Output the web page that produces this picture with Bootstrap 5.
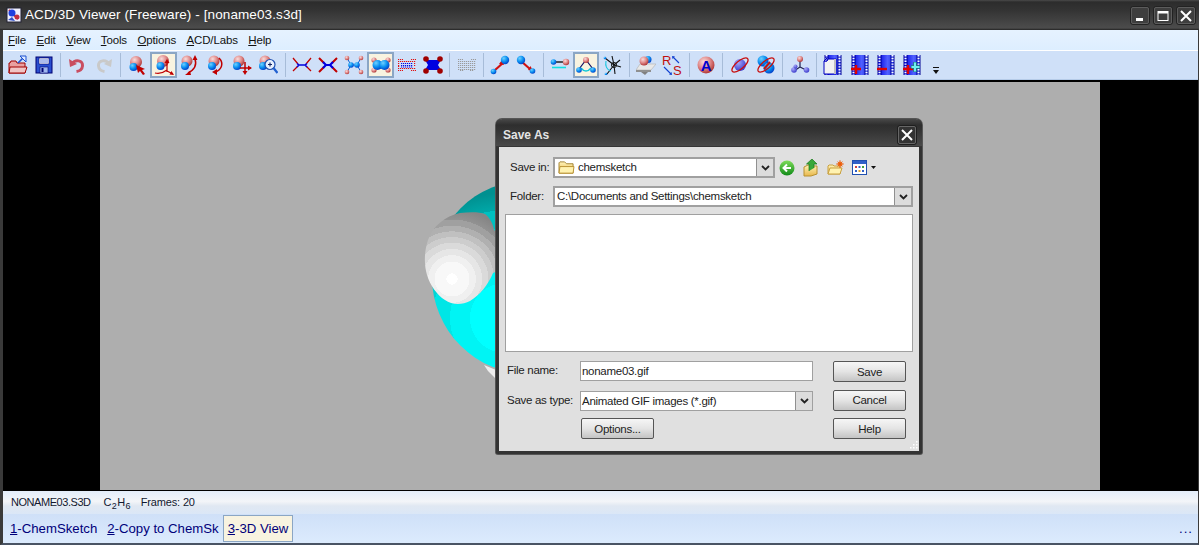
<!DOCTYPE html>
<html lang="en">
<head>
    <meta charset="UTF-8">
    <meta name="viewport" content="width=device-width, initial-scale=1.0">
    <title>ACD/3D Viewer (Freeware) - [noname03.s3d]</title>
    <link href="https://cdn.jsdelivr.net/npm/bootstrap@5.3.0/dist/css/bootstrap.min.css" rel="stylesheet">
    <style>
        html, body { height: 100%; overflow: hidden; }
        body { font-family: "Liberation Sans", Arial, sans-serif; font-size: 11.5px; letter-spacing: -.28px; background: #3a3a3a; color: #111; }
        .svg-defs { position: absolute; width: 0; height: 0; }

        .app-frame { height: 545px; border-left: 3px solid #3a3a3a; border-right: 1px solid #3a3a3a; border-bottom: 2px solid #4a5464; }
        .app-title { height: 30px; margin-left: -3px; margin-right: -1px; padding-left: 6px; background: linear-gradient(#4a4a4a 0, #2c2c2c 2px, #333 10px, #4c4c4c 28px, #222 30px); color: #fff; font-size: 13.5px; letter-spacing: .1px; }
        .app-title .app-name { margin-left: 3px; }
        .win-btn { width: 20px; height: 19px; margin-left: 3px; border: 1px solid #222; outline: 1px solid #5c5c5c; outline-offset: -2px; border-radius: 3px; background: #3e3e3e; padding: 0; }
        .win-btns { padding-right: 3px; padding-top: 1px; }

        .menu-strip { height: 20px; background: linear-gradient(#e6f2ff, #ddeeff); padding: 1px 0 0 2px; letter-spacing: -.15px; }
        .menu-item { padding: 0 3px; margin-right: 4.5px; color: #111; text-decoration: none; }
        .tool-strip { height: 30px; background: #cfe0f8; border-top: 1px solid #fff; border-bottom: 1px solid #b5cbe8; padding-left: 1.500px; }
        .tool-btn { width: 26.2px; height: 26px; padding: 0; display: flex; align-items: center; justify-content: center; border: 2px solid transparent; border-radius: 0; flex: none; }
        .tool-btn.is-on { background: #f8f3e0; border-color: #8ba6c4; }
        .tool-btn svg { width: 20px; height: 20px; flex: none; }
        .tool-sep { width: 1px; height: 24px; margin: 0 3.25px; background: #a7bcd8; flex: none; }
        .tool-more { margin-left: 8px; margin-top: 11px; }

        .stage-wrap { height: 411px; background: #000; padding: 2px 0 1px 97px; }
        .stage { width: 1000px; height: 408px; background: #aeaeae; position: relative; }
        .stage svg { position: absolute; left: 0; top: 0; }

        .status-strip { height: 23px; background: linear-gradient(#e3edfa, #f3f5f8 45%, #e0e8f2 65%, #dbe7f7); padding-left: 8px; color: #111830; font-size: 11px; letter-spacing: -.15px; }
        .status-file { letter-spacing: -.45px; margin-right: 13px; }
        .status-formula { margin-right: 10px; letter-spacing: .3px; }
        .status-strip sub { font-size: 9px; bottom: -.3em; }
        .tab-strip { height: 29px; background: linear-gradient(#cfe0f8, #dcebfd); padding-left: 4px; font-size: 13.2px; letter-spacing: 0; color: #00007a; }
        .tab-item { height: 27px; padding: 0 3px; display: flex; align-items: center; color: #00007a; margin-right: 4px; }
        .tab-item.is-on { background: #f8f3e0; border: 1px solid #8ba6c4; padding: 0 4px; margin-left: -3px; }
        .tab-dots { margin-left: auto; margin-right: 5px; letter-spacing: 1px; }

        .save-dialog { position: absolute; left: 496px; top: 119px; width: 426px; height: 335px; border: 3px solid #333; border-top: 0; border-radius: 6px 6px 2px 2px; background: #e0e0e0; box-shadow: 0 0 0 1px #555; }
        .dlg-title { height: 28px; margin: 0 -3px; padding: 3px 5px 0 7px; background: linear-gradient(#484848 0, #2e2e2e 6px, #343434 12px, #4a4a4a 27px, #222 28px); border-radius: 6px 6px 0 0; color: #e4e4e4; font-size: 12px; font-weight: 700; letter-spacing: 0; }
        .dlg-close { width: 20px; height: 20px; border: 1px solid #1e1e1e; outline: 1px solid #666; outline-offset: -2px; border-radius: 3px; background: #333; padding: 0; }
        .dlg-body { padding: 10px 6px 0; color: #222; white-space: nowrap; }
        .dlg-label { width: 48px; padding-left: 5px; flex: none; }
        .dlg-combo { height: 21px; border: 2px solid #a0a0a0; background: #fff; padding-left: 2px; overflow: hidden; }
        .dlg-combo-arrow { width: 17px; height: 100%; margin-left: auto; flex: none; background: #dcdcdc; border-left: 1px solid #909090; display: flex; align-items: center; justify-content: center; }
        .dlg-combo-wide { flex: 1 1 0; }
        .dlg-combo-short { width: 222px; }
        .dlg-folder { margin: 0 3px 0 1px; }
        .dlg-list { height: 138px; margin-top: 7px; background: #fff; border: 1px solid #a0a0a0; }
        .dlg-bottom { margin-top: 9px; padding-right: 7px; }
        .dlg-left { width: 308px; }
        .dlg-left-label { width: 75px; padding-left: 2px; flex: none; }
        .dlg-input { width: 233px; height: 20px; border: 1px solid #a0a0a0; background: #fff; padding-left: 1px; line-height: 18px; }
        .dlg-type-row { margin-top: 10px; margin-bottom: 7px; }
        .dlg-btn { width: 73px; height: 21px; padding: 0; font-size: 11.5px; letter-spacing: -.28px; line-height: 18px; color: #222; border: 1px solid #555; border-radius: 2px; background: linear-gradient(#f6f6f6, #e4e4e4 50%, #c4c4c4); }
        .dlg-options { margin-left: 76px; }
        .dlg-btn-stack { gap: 7.5px; }
        .dlg-tools svg { display: block; }
        .dlg-grip { position: absolute; right: 1px; bottom: 1px; width: 10px; height: 10px; }
    </style>
</head>
<body class="m-0">
    <svg class="svg-defs" xmlns="http://www.w3.org/2000/svg">
        <defs>
            <radialGradient id="gr-red" cx=".38" cy=".32" r=".75"><stop offset="0" stop-color="#f8dcdc"/><stop offset=".5" stop-color="#e08a8a"/><stop offset="1" stop-color="#a82828"/></radialGradient>
            <radialGradient id="gr-blue" cx=".35" cy=".3" r=".8"><stop offset="0" stop-color="#6fd0ff"/><stop offset=".5" stop-color="#0a90f0"/><stop offset="1" stop-color="#0030c0"/></radialGradient>
            <radialGradient id="gr-violet" cx=".35" cy=".3" r=".8"><stop offset="0" stop-color="#a8a8f8"/><stop offset="1" stop-color="#3030c8"/></radialGradient>
            <linearGradient id="gr-film" x1="0" x2="1"><stop offset="0" stop-color="#0000e0"/><stop offset=".6" stop-color="#5060ff"/><stop offset="1" stop-color="#2030e0"/></linearGradient>
            <linearGradient id="gr-folder" x1="0" y1="0" x2="0" y2="1"><stop offset="0" stop-color="#fff3b8"/><stop offset="1" stop-color="#e8b84c"/></linearGradient>
            <linearGradient id="gr-green" x1="0" y1="0" x2="0" y2="1"><stop offset="0" stop-color="#7edc5a"/><stop offset="1" stop-color="#108a18"/></linearGradient>
            <radialGradient id="gr-cyan" gradientUnits="userSpaceOnUse" cx="505" cy="318" r="125">
                <stop offset="0" stop-color="#00ffff"/><stop offset=".28" stop-color="#00ffff"/>
                <stop offset=".28" stop-color="#00f4f4"/><stop offset=".44" stop-color="#00f4f4"/>
                <stop offset=".44" stop-color="#00e6e6"/><stop offset=".58" stop-color="#00e6e6"/>
                <stop offset=".58" stop-color="#00d4d4"/><stop offset=".72" stop-color="#00d4d4"/>
                <stop offset=".72" stop-color="#00c0c0"/><stop offset=".86" stop-color="#00c0c0"/>
                <stop offset=".86" stop-color="#00a8a8"/><stop offset="1" stop-color="#009090"/>
            </radialGradient>
            <radialGradient id="gr-white" gradientUnits="userSpaceOnUse" cx="452" cy="279" r="70">
                <stop offset="0" stop-color="#fff"/><stop offset=".08" stop-color="#fff"/>
                <stop offset=".08" stop-color="#f8f8f8"/><stop offset=".25" stop-color="#f8f8f8"/>
                <stop offset=".25" stop-color="#f0f0f0"/><stop offset=".34" stop-color="#f0f0f0"/>
                <stop offset=".34" stop-color="#e6e6e6"/><stop offset=".43" stop-color="#e6e6e6"/>
                <stop offset=".43" stop-color="#dadada"/><stop offset=".52" stop-color="#dadada"/>
                <stop offset=".52" stop-color="#cdcdcd"/><stop offset=".6" stop-color="#cdcdcd"/>
                <stop offset=".6" stop-color="#c0c0c0"/><stop offset=".68" stop-color="#c0c0c0"/>
                <stop offset=".68" stop-color="#b0b0b0"/><stop offset=".76" stop-color="#b0b0b0"/>
                <stop offset=".76" stop-color="#a0a0a0"/><stop offset=".85" stop-color="#a0a0a0"/>
                <stop offset=".85" stop-color="#929292"/><stop offset="1" stop-color="#858585"/>
            </radialGradient>

            <g id="pair"><circle cx="9" cy="7" r="6" fill="url(#gr-red)"/><circle cx="6.5" cy="12" r="4" fill="url(#gr-blue)"/></g>

            <symbol id="i-open" viewBox="0 0 20 20"><path d="M1 18V8h1l1-2h5l1 2h8v10z" fill="#e9a0a0" stroke="#a00000"/><path d="M1 18l1-6h17l-2 6z" fill="#f0c4c4" stroke="#a00000"/><path d="M10 8l5-5" stroke="#1a50d0" stroke-width="1.6" fill="none"/><path d="M12 1h6v6l-2-2-2-2z" fill="#dfeaff" stroke="#1a50d0"/></symbol>
            <symbol id="i-save" viewBox="0 0 20 20"><rect x="2" y="2" width="16" height="16" fill="#2a4fd0" stroke="#000070"/><rect x="5" y="3" width="10" height="6" fill="#fff" stroke="#000070" stroke-width=".6"/><path d="M6 5h8M6 7h8" stroke="#5a78d8"/><rect x="6" y="12" width="8" height="6" fill="#9fb6f0" stroke="#000070" stroke-width=".6"/><rect x="7.5" y="13" width="2" height="4" fill="#000070"/></symbol>
            <symbol id="i-undo" viewBox="0 0 20 20"><path d="M5 9C8 4 16 5 15.5 11C15.200 14 13 16 9.500 16.500" fill="none" stroke="#c94d60" stroke-width="3"/><path d="M2 4l1 8 7-3z" fill="#c94d60"/></symbol>
            <symbol id="i-redo" viewBox="0 0 20 20"><path d="M15 9C12 4 4 5 4.500 11C4.800 14 7 16 10.500 16.500" fill="none" stroke="#c9c9c9" stroke-width="3"/><path d="M18 4l-1 8-7-3z" fill="#c9c9c9"/></symbol>

            <symbol id="i-pick" viewBox="0 0 20 20"><use href="#pair"/><path d="M9 10l9 4-3 1 3 4-2 1-3-4-2 2z" fill="#c00000"/></symbol>
            <symbol id="i-move" viewBox="0 0 20 20"><use href="#pair" transform="translate(0 -1)"/><path d="M13 17V7M1 18c4 1 8 0 12-3M13 16l6 3" stroke="#c00000" fill="none" stroke-width="1.200"/><path d="M13 4l-2.500 4h5zM20 20l-4.500-.5 2-3.500z" fill="#c00000"/></symbol>
            <symbol id="i-rotz" viewBox="0 0 20 20"><circle cx="7" cy="6" r="5.500" fill="url(#gr-red)"/><circle cx="5" cy="11" r="4" fill="url(#gr-blue)"/><path d="M15 4C17 10 14 15 8 18" fill="none" stroke="#c00000" stroke-width="1.500"/><path d="M15 0l-2.500 5h5zM5 20l5-4 1 4z" fill="#c00000"/></symbol>
            <symbol id="i-rotx" viewBox="0 0 20 20"><circle cx="8" cy="6" r="5.500" fill="url(#gr-red)"/><circle cx="6" cy="11" r="4" fill="url(#gr-blue)"/><path d="M13 3C18 8 16 15 9 17" fill="none" stroke="#c00000" stroke-width="1.500"/><path d="M6 17l5-3v6z" fill="#c00000"/></symbol>
            <symbol id="i-shift" viewBox="0 0 20 20"><circle cx="7" cy="6" r="5.500" fill="url(#gr-red)"/><circle cx="5" cy="11" r="4" fill="url(#gr-blue)"/><path d="M13 7v11M8 13h11" stroke="#c00000" stroke-width="1.500"/><path d="M13 20l-2.500-4h5zM20 13l-4-2.500v5z" fill="#c00000"/></symbol>
            <symbol id="i-zoom" viewBox="0 0 20 20"><circle cx="7" cy="6" r="5.500" fill="url(#gr-red)"/><circle cx="5" cy="11" r="4" fill="url(#gr-blue)"/><circle cx="12" cy="9.500" r="5" fill="#eaf2ff" stroke="#2050b0" stroke-width="1.200"/><path d="M10 9.500h4M12 7.500v4" stroke="#102060" stroke-width="1.100"/><path d="M15.500 13l4 5" stroke="#2060d0" stroke-width="2.200"/></symbol>

            <symbol id="i-wire" viewBox="0 0 20 20"><path d="M1 3l5 6M19 3l-5 6M1 16l5-5M19 16l-5-5" stroke="#c00000" stroke-width="1.300"/><path d="M5 8.500l2 1.500h6l2-1.500M5 12l2-2M15 12l-2-2" stroke="#0000e0" stroke-width="1.500" fill="none"/></symbol>
            <symbol id="i-stick" viewBox="0 0 20 20"><path d="M1 3l5 5M19 3l-5 5M1 17l5-5M19 17l-5-5" stroke="#c00000" stroke-width="2"/><path d="M5 7l3 3h4l3-3M5 13l3-3M15 13l-3-3" stroke="#0000e0" stroke-width="2.200" fill="none"/></symbol>
            <symbol id="i-ball" viewBox="0 0 20 20"><path d="M3 3l4 7h6l4-7M3 17l4-7M17 17l-4-7" stroke="#1060d0" stroke-width="1" fill="none"/><circle cx="3" cy="3" r="2.300" fill="url(#gr-red)"/><circle cx="17" cy="3" r="2.300" fill="url(#gr-red)"/><circle cx="3" cy="17" r="2.300" fill="url(#gr-red)"/><circle cx="17" cy="17" r="2.300" fill="url(#gr-red)"/><circle cx="7" cy="10" r="2.800" fill="url(#gr-blue)"/><circle cx="13" cy="10" r="2.800" fill="url(#gr-blue)"/></symbol>
            <symbol id="i-space" viewBox="0 0 20 20"><circle cx="3" cy="5" r="2.600" fill="url(#gr-red)"/><circle cx="17" cy="5" r="2.600" fill="url(#gr-red)"/><circle cx="3" cy="15" r="2.600" fill="url(#gr-red)"/><circle cx="17" cy="15" r="2.600" fill="url(#gr-red)"/><circle cx="6.500" cy="10" r="5" fill="url(#gr-blue)"/><circle cx="13.500" cy="10" r="5" fill="url(#gr-blue)"/></symbol>
            <symbol id="i-dots" viewBox="0 0 20 20"><path d="M1 4.500h5M14 4.500h5M1 6.500h18M1 13.500h18M1 15.500h5M14 15.500h5M1 8.500h2M1 10.500h2M1 11.500h2M17 8.500h2M17 10.500h2" stroke="#e01010" stroke-width="1.200" stroke-dasharray="1.200 .8"/><path d="M4 8.500h12M4 10.500h12M4 12h12" stroke="#0808e0" stroke-width="1.200" stroke-dasharray="1.200 .8"/></symbol>
            <symbol id="i-solid" viewBox="0 0 20 20"><path d="M2 5h16l-3 5 3 5H2l3-5z" fill="#0000e0"/><circle cx="3" cy="4" r="2.800" fill="#a00000"/><circle cx="17" cy="4" r="2.800" fill="#a00000"/><circle cx="3" cy="16" r="2.800" fill="#a00000"/><circle cx="17" cy="16" r="2.800" fill="#a00000"/></symbol>
            <symbol id="i-off" viewBox="0 0 20 20"><path d="M1 4.500h5M14 4.500h5M1 6.500h18M1 8.500h18M1 10.500h18M1 12.500h18M1 14.500h18M3 15.500h4M13 15.500h4" stroke="#9a9a9a" stroke-width="1.200" stroke-dasharray="1.200 .8"/></symbol>

            <symbol id="i-up" viewBox="0 0 20 20"><path d="M5 15l8-7" stroke="#d01010" stroke-width="2.200"/><path d="M12 5l2 5-5-1z" fill="#d01010"/><circle cx="3.500" cy="16.500" r="2.800" fill="url(#gr-blue)"/><circle cx="15" cy="5" r="4.200" fill="url(#gr-blue)"/></symbol>
            <symbol id="i-down" viewBox="0 0 20 20"><path d="M6 7l8 7" stroke="#d01010" stroke-width="2.200"/><path d="M17 16l-5-1 2.500-4z" fill="#d01010"/><circle cx="5" cy="5" r="4.200" fill="url(#gr-blue)"/><circle cx="16.500" cy="16" r="2.800" fill="url(#gr-blue)"/></symbol>
            <symbol id="i-bond" viewBox="0 0 20 20"><path d="M4 7h13" stroke="#202020" stroke-width="1.500"/><circle cx="3.500" cy="7" r="2.800" fill="url(#gr-blue)"/><circle cx="16" cy="7" r="3.200" fill="url(#gr-red)"/><path d="M2 12.500h14" stroke="#10e0e0" stroke-width="1.600"/></symbol>
            <symbol id="i-angle" viewBox="0 0 20 20"><path d="M3 14l7-9 7 9" stroke="#101060" stroke-width="1.200" fill="none"/><path d="M5 13c3 4 7 4 10 0" stroke="#10c8d8" fill="none" stroke-width="1.300"/><circle cx="10" cy="5" r="3" fill="url(#gr-red)"/><circle cx="3" cy="15" r="2.800" fill="url(#gr-blue)"/><circle cx="17" cy="15" r="2.800" fill="url(#gr-blue)"/></symbol>
            <symbol id="i-torsion" viewBox="0 0 20 20"><path d="M11 10L9 1M11 10l6-5M11 10l7 2M11 10l1 9M11 10L2 3M11 10l-7 9" stroke="#101010" stroke-width="1.100"/><path d="M3 6c-1 5 1 9 5 10" stroke="#20c8e0" fill="none" stroke-width="1.200"/><circle cx="11" cy="10" r="2.600" fill="none" stroke="#202020"/><circle cx="2" cy="3" r="1.300" fill="url(#gr-blue)"/><circle cx="3" cy="19" r="1.300" fill="url(#gr-blue)"/></symbol>
            <symbol id="i-plate" viewBox="0 0 20 20"><path d="M4 9h16l-5 6H0z" fill="#e8e8e8" stroke="#b0b0b0" stroke-width=".6"/><path d="M0 15h15v2H0z" fill="#909090"/><path d="M5 17h7l-3 3z" fill="#808080"/><circle cx="12" cy="4.500" r="3.500" fill="url(#gr-blue)"/><circle cx="8" cy="6" r="4.500" fill="url(#gr-red)"/></symbol>
            <symbol id="i-rs" viewBox="0 0 20 20"><text x="0" y="10" font-family="Liberation Sans, sans-serif" font-size="13" fill="#c01010">R</text><text x="11" y="20" font-family="Liberation Sans, sans-serif" font-size="13" fill="#c01010">S</text><path d="M11 2l6 6M2 12l7 7" stroke="#1040d0" stroke-width="1.100"/><path d="M10 1l3 .5-2.500 2.500zM10 20l-3-.5 2.500-2.500z" fill="#1040d0"/></symbol>
            <symbol id="i-atom" viewBox="0 0 20 20"><circle cx="10" cy="10" r="8.500" fill="url(#gr-red)"/><text x="10" y="15.500" text-anchor="middle" font-family="Liberation Sans, sans-serif" font-size="15" font-weight="700" fill="#0000d0">A</text></symbol>
            <symbol id="i-orbit" viewBox="0 0 20 20"><circle cx="10" cy="10" r="6" fill="url(#gr-violet)"/><ellipse cx="10" cy="10" rx="10" ry="4" transform="rotate(-40 10 10)" fill="none" stroke="#c81010" stroke-width="1.300"/></symbol>
            <symbol id="i-orbit2" viewBox="0 0 20 20"><circle cx="7" cy="6" r="5.500" fill="url(#gr-blue)"/><circle cx="13" cy="13" r="5.500" fill="url(#gr-blue)"/><ellipse cx="10" cy="10" rx="10" ry="4" transform="rotate(-40 10 10)" fill="none" stroke="#c81010" stroke-width="1.300"/><path d="M8 14l6-7" stroke="#c81010" stroke-width="2"/></symbol>
            <symbol id="i-tree" viewBox="0 0 20 20"><path d="M10 4v8l-6 4M10 12l6 3" stroke="#202050" stroke-width="1.200" fill="none"/><circle cx="10" cy="4" r="3" fill="url(#gr-red)"/><circle cx="4" cy="15" r="2.800" fill="url(#gr-violet)"/><circle cx="5.500" cy="11.500" r="2" fill="url(#gr-violet)"/><circle cx="16.500" cy="15" r="2.800" fill="url(#gr-violet)"/></symbol>

            <g id="film"><rect x="2" y="0" width="16" height="20" fill="url(#gr-film)"/><path d="M2 0v20M5 0v20M15 0v20M18 0v20" stroke="#000090"/><path d="M3.500 0v20M16.500 0v20" stroke="#fff" stroke-width="2" stroke-dasharray="1.400 1.400"/></g>
            <symbol id="i-film" viewBox="0 0 20 20"><use href="#film"/><path d="M1 6h3l1-2h8v15H1z" fill="#f2f2f2" stroke="#0000c0"/><path d="M1 6l3-3v3z" fill="#fff" stroke="#0000c0"/><rect x="11" y="4" width="2" height="15" fill="#c0c0c0"/></symbol>
            <symbol id="i-film-add" viewBox="0 0 20 20"><use href="#film"/><path d="M6 10v9M1 14h10" stroke="#e00000" stroke-width="2.400"/></symbol>
            <symbol id="i-film-del" viewBox="0 0 20 20"><use href="#film"/><path d="M1 14h10" stroke="#e00000" stroke-width="2.400"/></symbol>
            <symbol id="i-film-all" viewBox="0 0 20 20"><use href="#film"/><path d="M6 10v9M1 14h10" stroke="#e00000" stroke-width="2.400"/><path d="M13 7v10M9 12h9" stroke="#208080" stroke-width="3.600"/><path d="M13 7.500v9M9.500 12h8" stroke="#70f0f0" stroke-width="2"/></symbol>

            <symbol id="i-folder" viewBox="0 0 18 16"><path d="M1 14V3l1-1h5l2 2h7v10z" fill="url(#gr-folder)" stroke="#a08030"/><path d="M1 14l1-7h15l-1 7z" fill="#fff2b0" stroke="#b89030"/></symbol>
            <symbol id="i-combo" viewBox="0 0 9 6"><path d="M1 1l3.500 3.500L8 1" fill="none" stroke="#222" stroke-width="1.800"/></symbol>
        </defs>
    </svg>

    <div class="app-frame d-flex flex-column">
        <div class="app-title d-flex align-items-center">
            <svg width="16" height="16" viewBox="0 0 16 16"><rect x="1" y="1" width="14" height="14" fill="#f0f0ff" stroke="#223"/><path d="M3 3l9 9" stroke="#d02020" stroke-width="2"/><circle cx="6" cy="6" r="3.500" fill="#2040e0"/><circle cx="11" cy="10" r="2.500" fill="#c03040"/><path d="M2 13l4-3 3 4z" fill="#3050c8"/></svg>
            <span class="app-name">ACD/3D Viewer (Freeware) - [noname03.s3d]</span>
            <div class="win-btns d-flex ms-auto">
                <button class="win-btn d-flex align-items-center justify-content-center"><svg width="12" height="12" viewBox="0 0 12 12"><rect x="2" y="8" width="7" height="3" fill="#fff"/></svg></button>
                <button class="win-btn d-flex align-items-center justify-content-center"><svg width="12" height="12" viewBox="0 0 12 12"><rect x="1" y="1.500" width="10" height="9" fill="none" stroke="#fff"/><rect x="1" y="1" width="10" height="2.500" fill="#fff"/></svg></button>
                <button class="win-btn d-flex align-items-center justify-content-center"><svg width="12" height="12" viewBox="0 0 12 12"><path d="M1 1l10 10M11 1L1 11" stroke="#fff" stroke-width="2"/></svg></button>
            </div>
        </div>

        <div class="menu-strip d-flex align-items-center">
            <span class="menu-item"><u>F</u>ile</span>
            <span class="menu-item"><u>E</u>dit</span>
            <span class="menu-item"><u>V</u>iew</span>
            <span class="menu-item"><u>T</u>ools</span>
            <span class="menu-item"><u>O</u>ptions</span>
            <span class="menu-item"><u>A</u>CD/Labs</span>
            <span class="menu-item"><u>H</u>elp</span>
        </div>

        <div class="tool-strip d-flex align-items-center">
            <div class="tool-btn"><svg><use href="#i-open"/></svg></div>
            <div class="tool-btn"><svg><use href="#i-save"/></svg></div>
            <div class="tool-sep"></div>
            <div class="tool-btn"><svg><use href="#i-undo"/></svg></div>
            <div class="tool-btn"><svg><use href="#i-redo"/></svg></div>
            <div class="tool-sep"></div>
            <div class="tool-btn"><svg><use href="#i-pick"/></svg></div>
            <div class="tool-btn is-on"><svg><use href="#i-move"/></svg></div>
            <div class="tool-btn"><svg><use href="#i-rotz"/></svg></div>
            <div class="tool-btn"><svg><use href="#i-rotx"/></svg></div>
            <div class="tool-btn"><svg><use href="#i-shift"/></svg></div>
            <div class="tool-btn"><svg><use href="#i-zoom"/></svg></div>
            <div class="tool-sep"></div>
            <div class="tool-btn"><svg><use href="#i-wire"/></svg></div>
            <div class="tool-btn"><svg><use href="#i-stick"/></svg></div>
            <div class="tool-btn"><svg><use href="#i-ball"/></svg></div>
            <div class="tool-btn is-on"><svg><use href="#i-space"/></svg></div>
            <div class="tool-btn"><svg><use href="#i-dots"/></svg></div>
            <div class="tool-btn"><svg><use href="#i-solid"/></svg></div>
            <div class="tool-sep"></div>
            <div class="tool-btn"><svg><use href="#i-off"/></svg></div>
            <div class="tool-sep"></div>
            <div class="tool-btn"><svg><use href="#i-up"/></svg></div>
            <div class="tool-btn"><svg><use href="#i-down"/></svg></div>
            <div class="tool-sep"></div>
            <div class="tool-btn"><svg><use href="#i-bond"/></svg></div>
            <div class="tool-btn is-on"><svg><use href="#i-angle"/></svg></div>
            <div class="tool-btn"><svg><use href="#i-torsion"/></svg></div>
            <div class="tool-sep"></div>
            <div class="tool-btn"><svg><use href="#i-plate"/></svg></div>
            <div class="tool-btn"><svg><use href="#i-rs"/></svg></div>
            <div class="tool-sep"></div>
            <div class="tool-btn"><svg><use href="#i-atom"/></svg></div>
            <div class="tool-sep"></div>
            <div class="tool-btn"><svg><use href="#i-orbit"/></svg></div>
            <div class="tool-btn"><svg><use href="#i-orbit2"/></svg></div>
            <div class="tool-sep"></div>
            <div class="tool-btn"><svg><use href="#i-tree"/></svg></div>
            <div class="tool-sep"></div>
            <div class="tool-btn"><svg><use href="#i-film"/></svg></div>
            <div class="tool-btn"><svg><use href="#i-film-add"/></svg></div>
            <div class="tool-btn"><svg><use href="#i-film-del"/></svg></div>
            <div class="tool-btn"><svg><use href="#i-film-all"/></svg></div>
            <svg class="tool-more" width="6" height="7" viewBox="0 0 6 7"><path d="M0 0h6v1H0zM0 3h6L3 7z" fill="#111"/></svg>
        </div>

        <div class="stage-wrap">
            <div class="stage">
                <svg width="1000" height="408" viewBox="100 82 1000 408">
                    <circle cx="529" cy="277" r="97" fill="url(#gr-cyan)"/>
                    <path d="M484 365l12 5v9l-8-8z" fill="#eee"/>
                    <path d="M460 213C470 212 480 212 485 214C490 218 493 224 494 230L500 235V270L493 273C488 285 480 295 470 301C462 305 452 305 445 300C437 295 430 285 427 275C424 265 424 252 428 240C433 226 445 216 460 213z" fill="url(#gr-white)"/>
                </svg>
            </div>
        </div>

        <div class="status-strip d-flex align-items-center">
            <span class="status-file">NONAME03.S3D</span>
            <span class="status-formula">C<sub>2</sub>H<sub>6</sub></span>
            <span>Frames: 20</span>
        </div>

        <div class="tab-strip d-flex align-items-center">
            <span class="tab-item"><u>1</u>-ChemSketch</span>
            <span class="tab-item"><u>2</u>-Copy to ChemSk</span>
            <span class="tab-item is-on"><u>3</u>-3D View</span>
            <span class="tab-dots">...</span>
        </div>
    </div>

    <div class="save-dialog">
        <div class="dlg-title d-flex align-items-center justify-content-between">
            <span>Save As</span>
            <button class="dlg-close d-flex align-items-center justify-content-center"><svg width="12" height="12" viewBox="0 0 12 12"><path d="M1 1l10 10M11 1L1 11" stroke="#fff" stroke-width="2"/></svg></button>
        </div>
        <div class="dlg-body">
            <div class="d-flex align-items-center">
                <span class="dlg-label">Save in:</span>
                <div class="dlg-combo dlg-combo-short d-flex align-items-center">
                    <svg class="dlg-folder" width="17" height="15"><use href="#i-folder"/></svg>
                    <span>chemsketch</span>
                    <span class="dlg-combo-arrow"><svg width="9" height="6"><use href="#i-combo"/></svg></span>
                </div>
                <div class="dlg-tools d-flex align-items-center">
                    <svg class="ms-1" width="16" height="16" viewBox="0 0 16 16"><circle cx="8" cy="8" r="7.500" fill="url(#gr-green)"/><path d="M12 8H5M8 4.500L4.500 8 8 11.500" fill="none" stroke="#fff" stroke-width="2"/></svg>
                    <svg class="ms-2" width="16" height="18" viewBox="0 0 16 18"><path d="M1 17V8l4-2h2l1 1h6v8l-6 2z" fill="url(#gr-folder)" stroke="#b89030"/><path d="M6 12V5H3.500L9 0l5 5h-3v4" fill="#3aa83a" stroke="#1a7a1a" stroke-width=".7"/></svg>
                    <svg class="ms-2" width="17" height="16" viewBox="0 0 17 16"><path d="M1 14V6l1-1h4l1 1h6v8z" fill="url(#gr-folder)" stroke="#c8a040"/><path d="M1 14l2-6h12l-2 6z" fill="#fff2b0" stroke="#c8a040"/><circle cx="13" cy="4" r="2.500" fill="#f08020"/><path d="M13 0v8M9 4h8M10.500 1.500l5 5M15.500 1.500l-5 5" stroke="#e85010" stroke-width=".7"/></svg>
                    <svg class="ms-2" width="15" height="15" viewBox="0 0 15 15"><rect x=".5" y=".5" width="14" height="14" fill="#fff" stroke="#2050b0"/><rect x="1" y="1" width="13" height="3" fill="#3060c8"/><path d="M3 6h2v2H3z" fill="#d04040"/><path d="M6.500 6h2v2h-2z" fill="#3060c8"/><path d="M10 6h2v2h-2z" fill="#40a040"/><path d="M3 10h2v2H3z" fill="#3060c8"/><path d="M6.500 10h2v2h-2z" fill="#e0a020"/><path d="M10 10h2v2h-2z" fill="#3060c8"/></svg>
                    <svg class="ms-1" width="5" height="3" viewBox="0 0 5 3"><path d="M0 0h5L2.500 3z" fill="#111"/></svg>
                </div>
            </div>
            <div class="d-flex align-items-center mt-2">
                <span class="dlg-label">Folder:</span>
                <div class="dlg-combo dlg-combo-wide d-flex align-items-center">
                    <span>C:\Documents and Settings\chemsketch</span>
                    <span class="dlg-combo-arrow"><svg width="9" height="6"><use href="#i-combo"/></svg></span>
                </div>
            </div>
            <div class="dlg-list"></div>
            <div class="dlg-bottom d-flex justify-content-between">
                <div class="dlg-left d-flex flex-column">
                    <div class="d-flex align-items-center"><span class="dlg-left-label">File name:</span><div class="dlg-input">noname03.gif</div></div>
                    <div class="dlg-type-row d-flex align-items-center"><span class="dlg-left-label">Save as type:</span><div class="dlg-combo dlg-input d-flex align-items-center"><span>Animated GIF images (*.gif)</span><span class="dlg-combo-arrow"><svg width="9" height="6"><use href="#i-combo"/></svg></span></div></div>
                    <div class="d-flex"><button class="dlg-btn dlg-options">Options...</button></div>
                </div>
                <div class="dlg-btn-stack d-flex flex-column">
                    <button class="dlg-btn">Save</button>
                    <button class="dlg-btn">Cancel</button>
                    <button class="dlg-btn">Help</button>
                </div>
            </div>
        </div>
        <svg class="dlg-grip" viewBox="0 0 10 10"><path d="M8 1h1.500v1.500H8zM5 4h1.500v1.500H5zM8 4h1.500v1.500H8zM2 7h1.500v1.500H2zM5 7h1.500v1.500H5zM8 7h1.500v1.500H8z" fill="#fff"/></svg>
    </div>

    <script src="https://cdn.jsdelivr.net/npm/bootstrap@5.3.0/dist/js/bootstrap.bundle.min.js"></script>
</body>
</html>
